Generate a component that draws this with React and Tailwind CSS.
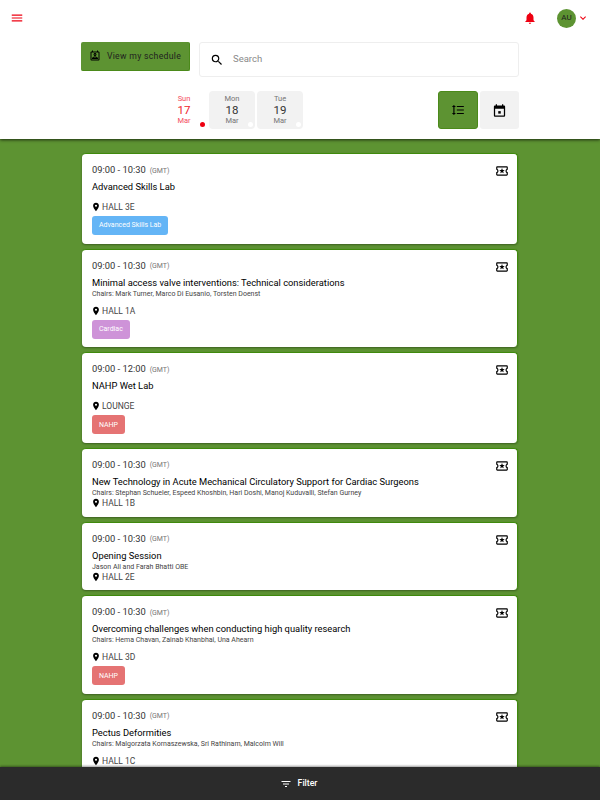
import React from "react";
import {
  MdMenu,
  MdNotifications,
  MdKeyboardArrowDown,
  MdOutlinePermContactCalendar,
  MdSearch,
  MdFormatLineSpacing,
  MdOutlineLocalActivity,
  MdPlace,
  MdFilterList,
} from "react-icons/md";

const sessions = [
  { time: "09:00 - 10:30", title: "Advanced Skills Lab", hall: "HALL 3E", tag: "Advanced Skills Lab", tagColor: "bg-[#64b5f6]", gap: true },
  { time: "09:00 - 10:30", title: "Minimal access valve interventions: Technical considerations", chairs: "Chairs: Mark Turner, Marco Di Eusanio, Torsten Doenst", hall: "HALL 1A", tag: "Cardiac", tagColor: "bg-[#ce93d8]" },
  { time: "09:00 - 12:00", title: "NAHP Wet Lab", hall: "LOUNGE", tag: "NAHP", tagColor: "bg-[#e57373]", gap: true },
  { time: "09:00 - 10:30", title: "New Technology in Acute Mechanical Circulatory Support for Cardiac Surgeons", chairs: "Chairs: Stephan Schueler, Espeed Khoshbin, Hari Doshi, Manoj Kuduvalli, Stefan Gurney", hall: "HALL 1B", tight: true },
  { time: "09:00 - 10:30", title: "Opening Session", chairs: "Jason Ali and Farah Bhatti OBE", hall: "HALL 2E", tight: true },
  { time: "09:00 - 10:30", title: "Overcoming challenges when conducting high quality research", chairs: "Chairs: Hema Chavan, Zainab Khanbhai, Una Ahearn", hall: "HALL 3D", tag: "NAHP", tagColor: "bg-[#e57373]" },
  { time: "09:00 - 10:30", title: "Pectus Deformities", chairs: "Chairs: Malgorzata Kornaszewska, Sri Rathinam, Malcolm Will", hall: "HALL 1C" },
];

const days = [
  { name: "Sun", num: "17", month: "Mar", active: true },
  { name: "Mon", num: "18", month: "Mar" },
  { name: "Tue", num: "19", month: "Mar" },
];

const CalendarIcon = () => (
  <svg viewBox="0 0 24 24" className="size-[15px]" fill="currentColor">
    <path d="M19 4h-1V2h-2v2H8V2H6v2H5c-1.1 0-2 .9-2 2v14c0 1.1.9 2 2 2h14c1.1 0 2-.9 2-2V6c0-1.1-.9-2-2-2zm0 16H5V9h14v11z" />
    <rect x="10" y="13" width="4" height="4" />
  </svg>
);

const DayTab = ({ day }) => (
  <div
    className={`relative flex h-[38px] w-[46px] flex-col items-center justify-between rounded py-[3px] text-[7.5px] leading-[10px] ${
      day.active ? "text-[#f44b5c]" : "bg-[#f2f2f2] text-[#757575]"
    }`}
  >
    <span>{day.name}</span>
    <span className={`text-[11.5px] leading-[12px] ${day.active ? "text-[#f01c2c]" : "text-[#333]"}`}>{day.num}</span>
    <span>{day.month}</span>
    <span className={`absolute bottom-[2px] right-[2px] size-[5px] rounded-full ${day.active ? "bg-[#ee0011]" : "bg-white"}`} />
  </div>
);

const SessionCard = ({ s }) => (
  <div className="relative rounded-[4px] border-t border-r border-[#3f8a0c] bg-white pl-[10px] pr-[10px] pt-[10px] pb-[8.67px] shadow-[0_1px_2px_rgba(0,0,0,0.35)]">
    <MdOutlineLocalActivity className="absolute right-[8px] top-[10px] text-[14px] text-black" />
    <div className="flex h-[12px] items-center gap-[4px]">
      <span className="text-[9.33px] leading-[12px] text-[#333]">{s.time}</span>
      <span className="pt-[1px] text-[7px] leading-[10px] text-[#757575]">(GMT)</span>
    </div>
    <div className="mt-[5px] text-[9.33px] leading-[12px] text-black">{s.title}</div>
    {s.chairs && <div className="mt-[1px] text-[7px] leading-[9px] text-[#444]">{s.chairs}</div>}
    <div className={`flex items-center gap-[1px] text-[8.5px] leading-[10px] text-[#444] ${s.tight ? "mt-0" : s.gap ? "mt-[9px]" : "mt-[7px]"}`}>
      <MdPlace className="-ml-[1px] text-[10px] text-black" />
      <span>{s.hall}</span>
    </div>
    {s.tag && (
      <div className={`mt-[4px] flex h-[19px] w-fit items-center rounded-[3px] px-[7px] text-[7px] text-white ${s.tagColor}`}>
        {s.tag}
      </div>
    )}
  </div>
);

export default function App() {
  return (
    <div className="flex h-[800px] w-[600px] flex-col overflow-hidden bg-[#5d9332] font-['Roboto',sans-serif] antialiased">
      <header className="relative z-10 h-[139px] shrink-0 bg-white shadow-[0_1px_3px_rgba(0,0,0,0.7)]">
        <div className="flex h-[36px] items-center justify-between pl-[10px] pr-[11px]">
          <MdMenu className="text-[14px] text-[#ee0011]" />
          <div className="flex items-center">
            <MdNotifications className="mr-[20px] text-[14px] text-[#ee0011]" />
            <div className="flex size-[19px] items-center justify-center rounded-full bg-[#5d9332] text-[8px] text-[#1c1c1c]">AU</div>
            <MdKeyboardArrowDown className="ml-[1px] text-[12px] text-[#ee0011]" />
          </div>
        </div>

        <div className="mx-auto w-[438px]">
          <div className="mt-[6px] flex gap-[9px]">
            <button className="flex h-[29px] w-[109px] items-center justify-center gap-[6px] rounded-[2px] border-b border-r border-[#4b8a1a] bg-[#5d9332] text-[8.67px] tracking-[0.3px] text-[#1f1f1f]">
              <MdOutlinePermContactCalendar className="text-[12px] text-black" />
              View my schedule
            </button>
            <div className="flex h-[35px] flex-1 items-center rounded-[3px] border border-[#eeeeee] pl-[10px]">
              <MdSearch className="text-[14px] text-black" />
              <span className="ml-[9px] text-[9.5px] text-[#8a8a8a]">Search</span>
            </div>
          </div>

          <div className="mt-[14px] flex items-start justify-between">
            <div className="ml-[80px] flex gap-[2px]">
              {days.map((d) => (
                <DayTab key={d.num} day={d} />
              ))}
            </div>
            <div className="flex gap-[2px]">
              <div className="flex h-[38px] w-[40px] items-center justify-center rounded-[3px] border border-[#4b8a1a] bg-[#5d9332]">
                <MdFormatLineSpacing className="text-[14px] text-black" />
              </div>
              <div className="flex h-[38px] w-[39px] items-center justify-center rounded-[3px] bg-[#f2f2f2] text-black">
                <CalendarIcon />
              </div>
            </div>
          </div>
        </div>
      </header>

      <main className="flex min-h-0 flex-1 flex-col gap-[5px] overflow-hidden px-[82px] pt-[14px]">
        {sessions.map((s) => (
          <div key={s.title} className="shrink-0">
            <SessionCard s={s} />
          </div>
        ))}
      </main>

      <footer className="z-10 flex h-[33px] shrink-0 items-center justify-center gap-[6px] bg-[#2b2b2b] pr-[3px] text-[8.67px] font-medium text-white shadow-[0_-1px_2px_rgba(0,0,0,0.4)]">
        <MdFilterList className="text-[12px]" />
        Filter
      </footer>
    </div>
  );
}
